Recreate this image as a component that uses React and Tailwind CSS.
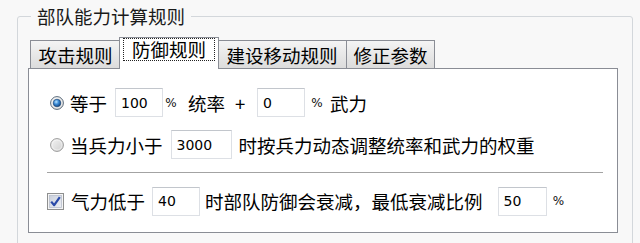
import React from "react";

function Radio({ checked, id }) {
  return (
    <svg width="14" height="14" viewBox="0 0 14 14" className="shrink-0">
      <defs>
        <linearGradient id={id + "o"} x1="0" y1="0" x2="1" y2="1">
          <stop offset="0" stopColor="#f4f4f4" />
          <stop offset="1" stopColor="#cfcfcf" />
        </linearGradient>
        <radialGradient id={id + "i"} cx="0.4" cy="0.35" r="0.7">
          <stop offset="0" stopColor="#b9e4ff" />
          <stop offset="0.45" stopColor="#3a8ad6" />
          <stop offset="1" stopColor="#0d3f7a" />
        </radialGradient>
      </defs>
      <circle cx="7" cy="7" r="6.4" fill={`url(#${id}o)`} stroke={checked ? "#5a6a7a" : "#9a9a9a"} strokeWidth="1" />
      <circle cx="7" cy="7" r="5" fill="none" stroke="#ffffff" strokeOpacity="0.6" strokeWidth="0.8" />
      {checked && <circle cx="7" cy="7" r="3.8" fill={`url(#${id}i)`} stroke="#18406e" strokeWidth="0.6" />}
    </svg>
  );
}

function Check() {
  return (
    <svg width="17" height="17" viewBox="0 0 17 17" className="shrink-0">
      <defs>
        <linearGradient id="cbg" x1="0" y1="0" x2="1" y2="1">
          <stop offset="0" stopColor="#c9cfdb" />
          <stop offset="1" stopColor="#eef0f5" />
        </linearGradient>
      </defs>
      <rect x="0.5" y="0.5" width="16" height="16" fill="#f4f4f4" stroke="#8e8f8f" />
      <rect x="2.5" y="2.5" width="12" height="12" fill="url(#cbg)" stroke="#b8bfcc" strokeWidth="0.8" />
      <path d="M4.2 8.6 L7.2 12.2 L12.8 4.2" fill="none" stroke="#2a4aa8" strokeWidth="2.2" strokeLinejoin="round" />
    </svg>
  );
}

function Field({ value, w }) {
  return (
    <div
      className={`${w} h-[29px] shrink-0 bg-white border border-[#dde0e5] border-t-[#c2c6cc] pl-[5px] flex items-center text-[14px] text-black font-['DejaVu_Sans',sans-serif]`}
    >
      {value}
    </div>
  );
}

function Pct({ ml }) {
  return (
    <span className={`${ml} w-[12px] shrink-0 text-center text-[12px] font-['DejaVu_Sans',sans-serif] text-[#111]`}>
      %
    </span>
  );
}

export default function App() {
  return (
    <div className="w-[640px] h-[243px] overflow-hidden bg-[#f8f8f8] pt-[4px] pl-[17px] font-['Noto_Sans_CJK_SC','Noto_Sans',sans-serif] text-[18.5px] text-black">
      <fieldset className="w-[616px] h-[280px] border border-[#d3d7db] rounded-[3px] pl-[10px]">
        <legend className="ml-[3px] px-[6px] leading-[24px] text-[#1a1a1a]">部队能力计算规则</legend>
        <div className="pt-[9px] flex items-end pl-[2px]">
          <div className="w-[91px] h-[28px] border border-b-0 border-[#8a8d95] bg-gradient-to-b from-[#f4f4f4] to-[#dcdcdc] flex items-center justify-center leading-[24px]">
            攻击规则
          </div>
          <div className="relative z-10 -mx-[2px] mb-[-1px] w-[100px] h-[32px] border border-b-0 border-[#8a8d95] bg-white flex justify-center items-start">
            <span className="border border-dotted border-[#222] px-[8px] leading-[21px]">防御规则</span>
          </div>
          <div className="w-[130px] h-[28px] border border-b-0 border-[#8a8d95] bg-gradient-to-b from-[#f4f4f4] to-[#dcdcdc] flex items-center justify-center leading-[24px]">
            建设移动规则
          </div>
          <div className="-ml-px w-[89px] h-[28px] border border-b-0 border-[#8a8d95] bg-gradient-to-b from-[#f4f4f4] to-[#dcdcdc] flex items-center justify-center leading-[24px]">
            修正参数
          </div>
        </div>
        <div className="w-[590px] h-[165px] border border-[#8a8d95] bg-white pl-[21px] flex flex-col">
          <div className="mt-[19px] h-[29px] flex items-center leading-[24px]">
            <Radio checked id="r1" />
            <span className="ml-[6px]">等于</span>
            <div className="ml-[8px]"><Field value="100" w="w-[48px]" /></div>
            <Pct ml="ml-[2px]" />
            <span className="ml-[11px]">统率</span>
            <span className="ml-[9px] w-[12px] text-center">+</span>
            <div className="ml-[11px]"><Field value="0" w="w-[48px]" /></div>
            <Pct ml="ml-[6px]" />
            <span className="ml-[7px]">武力</span>
          </div>
          <div className="mt-[13px] h-[29px] flex items-center leading-[24px]">
            <Radio id="r2" />
            <span className="ml-[6px]">当兵力小于</span>
            <div className="ml-[8px]"><Field value="3000" w="w-[61px]" /></div>
            <span className="ml-[7px]">时按兵力动态调整统率和武力的权重</span>
          </div>
          <div className="mt-[13px] ml-[-3px] w-[556px] h-px bg-[#a3a3a3] shrink-0" />
          <div className="mt-[14px] h-[28px] flex items-center leading-[24px]">
            <div className="ml-[-3px] flex"><Check /></div>
            <span className="ml-[7px]">气力低于</span>
            <div className="ml-[7px]"><Field value="40" w="w-[48px]" /></div>
            <span className="ml-[5px]">时部队防御会衰减，最低衰减比例</span>
            <div className="ml-[15px]"><Field value="50" w="w-[49px]" /></div>
            <Pct ml="ml-[6px]" />
          </div>
        </div>
      </fieldset>
    </div>
  );
}
